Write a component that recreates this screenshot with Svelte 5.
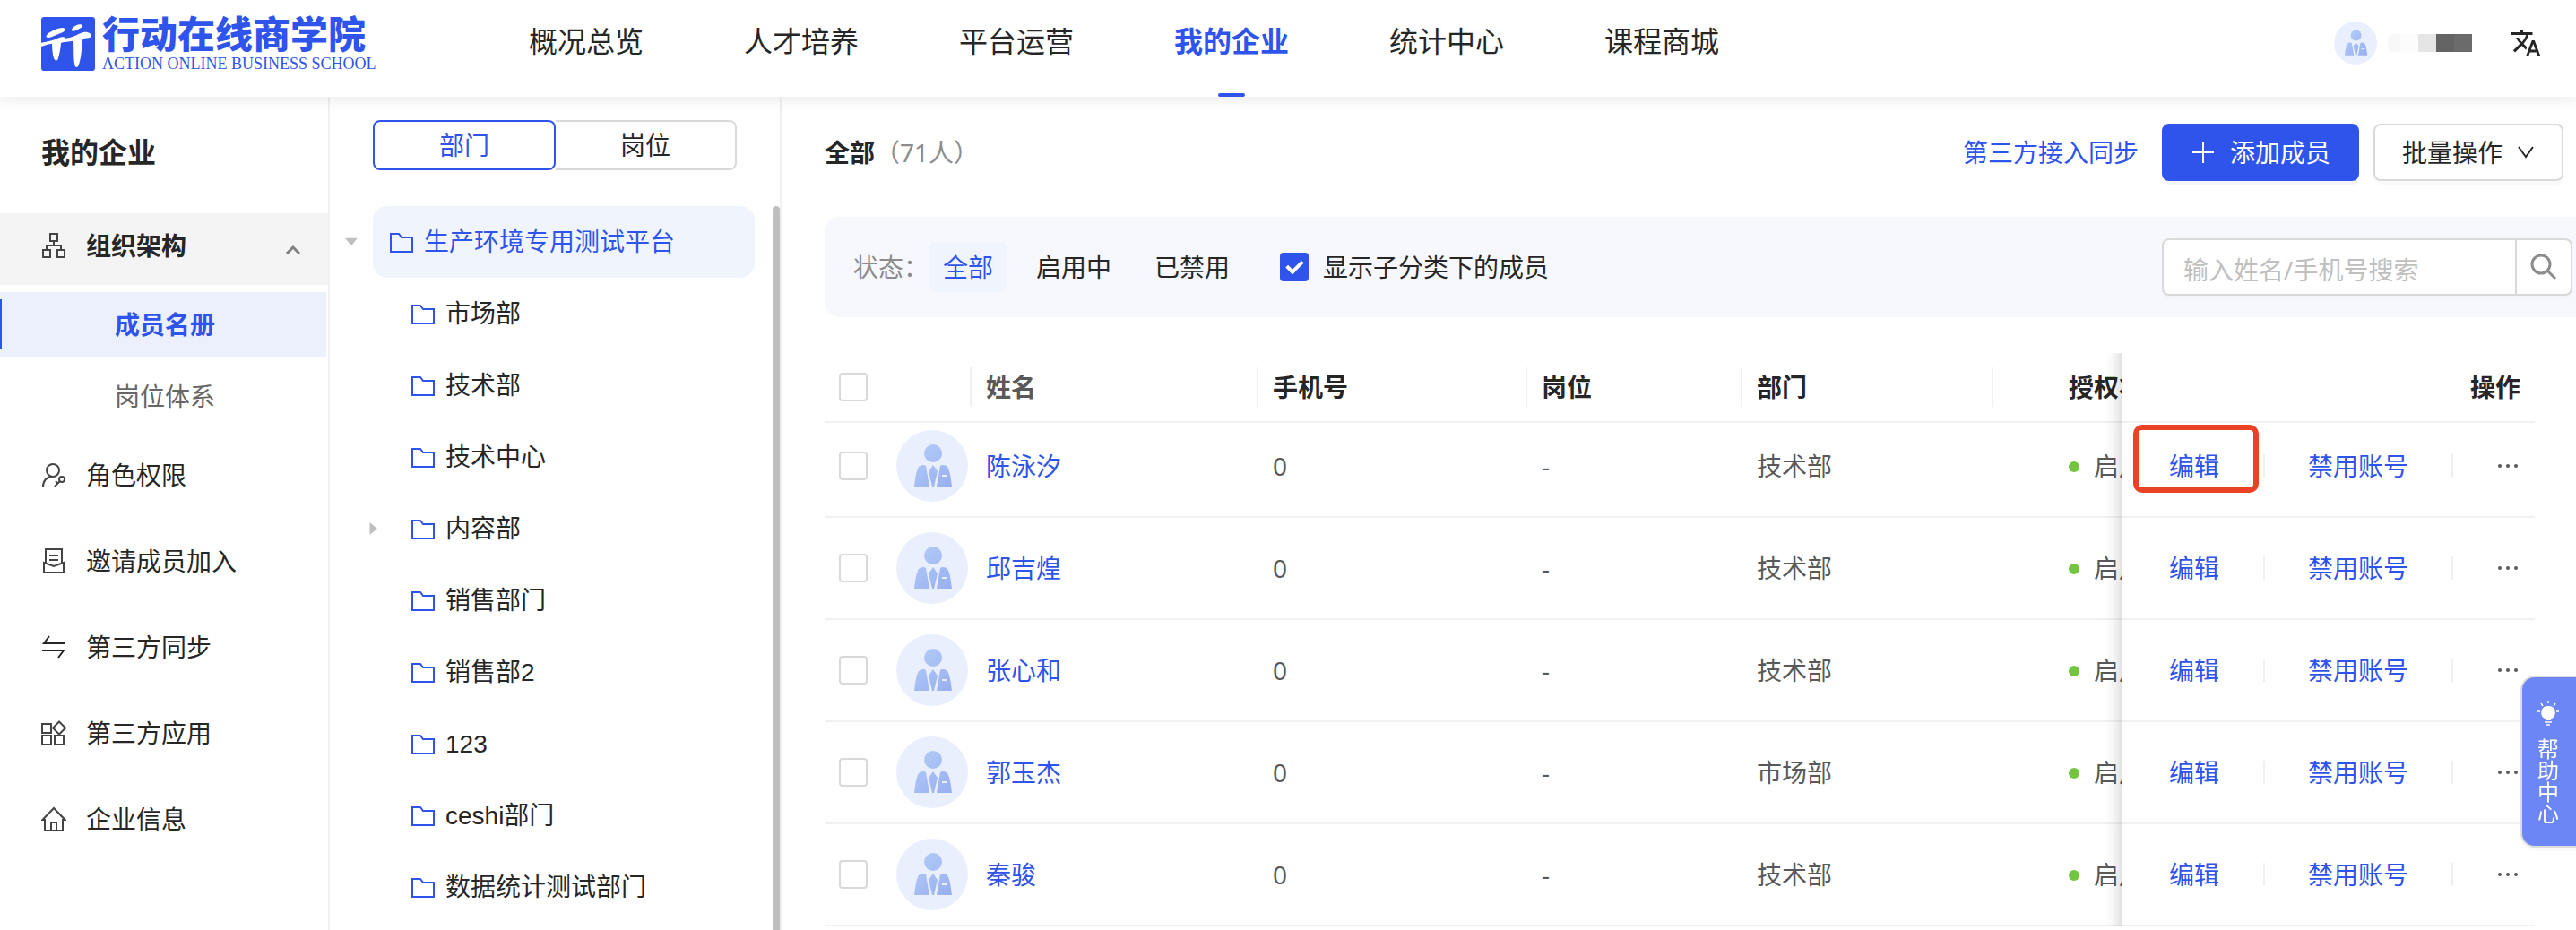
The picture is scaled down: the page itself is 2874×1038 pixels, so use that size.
<script>
  const navs = ['概况总览', '人才培养', '平台运营', '我的企业', '统计中心', '课程商城'];
  const statuses = ['全部', '启用中', '已禁用'];

  const folders = [
    { name: '市场部' },
    { name: '技术部' },
    { name: '技术中心' },
    { name: '内容部', hasChildren: true },
    { name: '销售部门' },
    { name: '销售部2' },
    { name: '123' },
    { name: 'ceshi部门' },
    { name: '数据统计测试部门' }
  ];

  const members = [
    { name: '陈泳汐', phone: '0', post: '-', dept: '技术部' },
    { name: '邱吉煌', phone: '0', post: '-', dept: '技术部' },
    { name: '张心和', phone: '0', post: '-', dept: '技术部' },
    { name: '郭玉杰', phone: '0', post: '-', dept: '市场部' },
    { name: '秦骏', phone: '0', post: '-', dept: '技术部' }
  ];

  let activeNav = $state('我的企业');
  let activeMenu = $state('成员名册');
  let activeTab = $state('部门');
  let activeStatus = $state('全部');
  let showChildren = $state(true);
  let keyword = $state('');
  let selected = $state([]);

  let allSelected = $derived(selected.length === members.length);

  function toggleAll() {
    selected = allSelected ? [] : members.map((m) => m.name);
  }
</script>

{#snippet avatar()}
  <svg class="avatar" viewBox="0 0 80 80" aria-hidden="true">
    <defs>
      <linearGradient id="suit" x1="18" y1="15" x2="62" y2="64" gradientUnits="userSpaceOnUse">
        <stop offset="0" stop-color="#b4cff8" />
        <stop offset="1" stop-color="#98aef1" />
      </linearGradient>
    </defs>
    <circle cx="40" cy="40" r="40" fill="#e9effc" />
    <g fill="url(#suit)">
      <circle cx="41" cy="26" r="10" />
      <path d="M20 63c1-8 2-16 4-20 1-3 3-4 7-4l2 1 4 23z" />
      <path d="M62 63c-1-8-2-16-4-20-1-3-3-4-7-4l-2 1-4 23zM51 50v2h6v-2z" fill-rule="evenodd" />
      <path d="M41 39l5 7-4 17h-2l-4-17z" />
    </g>
  </svg>
{/snippet}

{#snippet folderIcon()}
  <svg class="folder" viewBox="0 0 26 22" fill="none" stroke="#2f54eb" stroke-width="2" aria-hidden="true">
    <path d="M1 1h9l3 4h12v16H1z" />
  </svg>
{/snippet}

<div class="page">
  <header class="topbar">
    <a class="logo" href="#home">
      <svg viewBox="30 30 180 180" aria-hidden="true">
        <rect x="30" y="30" width="180" height="180" rx="10" fill="#2f54eb" />
        <g fill="#fff">
          <path d="M47 92c8-12 38-26 54-26 11 0 11 9 1 15L66 96c-11 4-22 4-19-4z" />
          <path d="M132 72c3-9 18-17 28-17 9 0 10 7 3 11l-17 9c-7 3-16 4-14-3z" />
          <path d="M30 116c22-4 44-8 60-17 10-5 20-2 22 2 22-1 38-14 60-20 12-2 27 4 26 13-2 6-12 7-20 7l-8 1c-2 8-4 20-5 36-1 20-5 44-12 57-4 5-9 3-11-4-4-21-3-54-4-81l-36 5-6 2c-1 14-4 36-10 54-4 8-11 5-14-3-5-14-5-32-6-49-12 2-24 5-36 10z" />
        </g>
      </svg>
      <span class="logo-text">
        <strong>行动在线商学院</strong>
        <small>ACTION ONLINE BUSINESS SCHOOL</small>
      </span>
    </a>
    <nav class="nav">
      {#each navs as n}
        <a href="#nav" class:active={n === activeNav} onclick={() => (activeNav = n)}>{n}</a>
      {/each}
    </nav>
    <div class="user">
      {@render avatar()}
      <span class="user-name"><i></i><i></i><i></i><i></i><i></i></span>
      <button class="lang" aria-label="语言">
        <svg viewBox="0 0 24 24" fill="#262626" aria-hidden="true">
          <path d="M12.870 15.070l-2.540-2.510.03-.03c1.740-1.940 2.980-4.170 3.710-6.530H17V4h-7V2H8v2H1v1.990h11.170C11.500 7.920 10.440 9.750 9 11.350 8.070 10.320 7.300 9.190 6.690 8h-2c.73 1.630 1.730 3.170 2.980 4.560l-5.090 5.020L4 19l5-5 3.110 3.110.76-2.040zM18.500 10h-2L12 22h2l1.120-3h4.750L21 22h2l-4.500-12zm-2.620 7l1.620-4.330L19.120 17h-3.240z" />
        </svg>
      </button>
    </div>
  </header>

  <div class="body">
    <aside class="side">
      <h1>我的企业</h1>
      <button class="menu open">
        <svg viewBox="0 0 28 28" class="menu-icon" aria-hidden="true">
          <path d="M10 1h8v8h-8zM2 19h8v8H2zM18 19h8v8h-8zM14 9v5M6 19v-5h16v5" />
        </svg>
        <span>组织架构</span>
        <svg class="chevron" viewBox="0 0 18 12" aria-hidden="true">
          <path d="M2 10l7-7 7 7" />
        </svg>
      </button>
      <div class="submenu">
        {#each ['成员名册', '岗位体系'] as s}
          <button class:active={s === activeMenu} onclick={() => (activeMenu = s)}>{s}</button>
        {/each}
      </div>
      <button class="menu">
        <svg viewBox="0 0 28 28" class="menu-icon" aria-hidden="true">
          <circle cx="13" cy="9" r="7" />
          <path d="M2 27c0-6 4-11 10-11" />
          <circle cx="23" cy="19" r="3" />
          <path d="M21 21l-6 6M16 21l3 3" />
        </svg>
        <span>角色权限</span>
      </button>
      <button class="menu">
        <svg viewBox="0 0 28 28" class="menu-icon" aria-hidden="true">
          <path d="M5 16V1h18v15M3 16v11h22V16l-11 4zM9 8h10M9 13h10" />
        </svg>
        <span>邀请成员加入</span>
      </button>
      <button class="menu">
        <svg viewBox="0 0 28 28" class="menu-icon" aria-hidden="true">
          <path d="M9 2l-6 8h24M1 18h24l-6 8" stroke="#262626" />
        </svg>
        <span>第三方同步</span>
      </button>
      <button class="menu">
        <svg viewBox="0 0 28 28" class="menu-icon" aria-hidden="true">
          <path d="M1 4h10v10H1zM1 17h10v10H1zM15 17h10v10H15zM20 1.500l7 7-7 7-7-7z" />
        </svg>
        <span>第三方应用</span>
      </button>
      <button class="menu">
        <svg viewBox="0 0 28 28" class="menu-icon" aria-hidden="true">
          <path d="M5 15H1.500L14 2l12.500 13H24v12H4V15M11 27v-9h6v9" />
        </svg>
        <span>企业信息</span>
      </button>
    </aside>

    <section class="tree">
      <div class="tabs">
        {#each ['部门', '岗位'] as t}
          <button class:active={t === activeTab} onclick={() => (activeTab = t)}>{t}</button>
        {/each}
      </div>
      <div class="tree-scroll">
        <ul>
          <li class="root">
            <span class="arrow down"></span>
            <button>{@render folderIcon()}生产环境专用测试平台</button>
          </li>
          {#each folders as f}
            <li>
              <span class="arrow" class:right={f.hasChildren}></span>
              <button>{@render folderIcon()}{f.name}</button>
            </li>
          {/each}
        </ul>
        <div class="scrollbar"></div>
      </div>
    </section>

    <main>
      <div class="heading">
        <h2>全部<span>（71人）</span></h2>
        <a href="#sync">第三方接入同步</a>
        <button class="btn primary">
          <svg viewBox="0 0 24 24" aria-hidden="true"><path d="M12 0v24M0 12h24" /></svg>
          添加成员
        </button>
        <button class="btn">
          批量操作
          <svg class="down" viewBox="0 0 20 14" aria-hidden="true"><path d="M2 1l8 11 8-11" /></svg>
        </button>
      </div>

      <div class="filter">
        <span class="label">状态：</span>
        <div class="chips">
          {#each statuses as s}
            <button class:active={s === activeStatus} onclick={() => (activeStatus = s)}>{s}</button>
          {/each}
        </div>
        <label class="check">
          <input type="checkbox" bind:checked={showChildren} />
          显示子分类下的成员
        </label>
        <form class="search" onsubmit={(e) => e.preventDefault()}>
          <input type="text" aria-label="搜索成员" placeholder="输入姓名/手机号搜索" bind:value={keyword} />
          <button aria-label="搜索">
            <svg viewBox="0 0 30 30" aria-hidden="true">
              <circle cx="12" cy="12" r="10" />
              <path d="M19 19l9 9" />
            </svg>
          </button>
        </form>
      </div>

      <div class="table-wrap">
        <table>
          <colgroup>
            <col class="c-check" />
            <col class="c-avatar" />
            <col class="c-name" />
            <col class="c-phone" />
            <col class="c-post" />
            <col class="c-dept" />
            <col class="c-state" />
            <col class="c-action" />
          </colgroup>
          <thead>
            <tr>
              <th><input type="checkbox" aria-label="全选" checked={allSelected} onchange={toggleAll} /></th>
              <th class="split"></th>
              <th class="split soft">姓名</th>
              <th class="split">手机号</th>
              <th class="split">岗位</th>
              <th class="split">部门</th>
              <th class="state">授权状态</th>
              <th class="fixed">操作</th>
            </tr>
          </thead>
          <tbody>
            {#each members as m, i (m.name)}
              <tr>
                <td><input type="checkbox" aria-label={m.name} value={m.name} bind:group={selected} /></td>
                <td class="face">{@render avatar()}</td>
                <td><a href="#member">{m.name}</a></td>
                <td>{m.phone}</td>
                <td>{m.post}</td>
                <td>{m.dept}</td>
                <td class="state"><span class="dot"></span>启用中</td>
                <td class="fixed">
                  <div class="actions">
                    <a href="#edit" class:marked={i === 0}>编辑</a>
                    <i></i>
                    <a href="#disable">禁用账号</a>
                    <i></i>
                    <button aria-label="更多">
                      <svg viewBox="0 0 24 8" fill="#595959" aria-hidden="true">
                        <circle cx="3" cy="4" r="2" />
                        <circle cx="12" cy="4" r="2" />
                        <circle cx="21" cy="4" r="2" />
                      </svg>
                    </button>
                  </div>
                </td>
              </tr>
            {/each}
          </tbody>
        </table>
      </div>
    </main>
  </div>

  <button class="help">
    <svg viewBox="0 0 26 28" aria-hidden="true">
      <path d="M13 6a7.500 7.500 0 0 1 4 14c-1 1-1 1-1 2h-6c0-1 0-1-1-2a7.500 7.500 0 0 1 4-14z" fill="#fff" />
      <path d="M13 0v3M5 3l2 3M21 3l-2 3M1 12h3M22 12h3M9 24h8M11 27h4" stroke="#fff" stroke-width="1.500" />
    </svg>
    <span>帮助中心</span>
  </button>
</div>

<style>
  :global(body) {
    overflow: hidden;
    background: #fff;
  }

  .page {
    height: 100vh;
    display: flex;
    flex-direction: column;
    font-family: 'Noto Sans', 'Noto Sans CJK SC', sans-serif;
    font-size: 28px;
    line-height: 40px;
    color: #262626;
  }

  button, input {
    margin: 0;
    font: inherit;
    color: inherit;
  }

  button {
    padding: 0;
    border: none;
    background: none;
    cursor: pointer;
  }

  a {
    color: #2f54eb;
    text-decoration: none;
  }

  svg { display: block; flex-shrink: 0; }

  /* top bar */
  .topbar {
    position: relative;
    z-index: 2;
    flex-shrink: 0;
    display: flex;
    align-items: center;
    height: 108px;
    padding: 0 38px 0 46px;
    box-sizing: border-box;
    background: #fff;
    box-shadow: 0 2px 16px rgba(0, 21, 41, 0.1);
  }

  .logo {
    display: flex;
    gap: 8px;
    width: 544px;
    padding-bottom: 8px;
    box-sizing: border-box;
  }
  .logo svg { width: 60px; height: 60px; }
  .logo-text {
    display: flex;
    flex-direction: column;
    gap: 4px;
    white-space: nowrap;
  }
  .logo-text strong {
    font-size: 42px;
    font-weight: 900;
    line-height: 38px;
  }
  .logo-text small {
    font-family: 'Liberation Serif', serif;
    font-size: 18px;
    line-height: 20px;
  }

  .nav {
    display: flex;
    gap: 112px;
    height: 100%;
  }
  .nav a {
    display: flex;
    flex-direction: column;
    justify-content: space-between;
    align-items: center;
    font-size: 32px;
    line-height: 92px;
    color: #262626;
  }
  .nav a::after {
    content: '';
    width: 30px;
    height: 4px;
    border-radius: 2px;
  }
  .nav .active { font-weight: 700; color: #2f54eb; }
  .nav .active::after { background: #2f54eb; }

  .user {
    display: flex;
    align-items: center;
    margin-left: auto;
    padding-bottom: 12px;
  }
  .user .avatar { width: 48px; height: 48px; }
  .user-name {
    display: flex;
    margin: 0 42px 0 12px;
  }
  .user-name i {
    width: 20px;
    height: 20px;
    background: #f8f8f8;
  }
  .user-name i:first-child { width: 14px; border-radius: 6px 0 0 6px; }
  .user-name i:nth-child(2) { background: #fcfcfc; }
  .user-name i:nth-child(3) { background: #e5e5e5; }
  .user-name i:nth-child(4) { background: #646464; }
  .user-name i:nth-child(5) { background: #6b6b6b; }
  .lang svg { width: 36px; height: 36px; }

  .body {
    flex: 1;
    min-height: 0;
    display: flex;
  }

  /* side menu */
  .side {
    flex-shrink: 0;
    width: 366px;
    border-right: 2px solid #f0f0f0;
    overflow: hidden;
  }
  .side h1 {
    margin: 0;
    padding: 40px 46px 46px;
    font-size: 32px;
    font-weight: 700;
    line-height: 44px;
  }
  .menu {
    display: flex;
    align-items: center;
    gap: 22px;
    width: 100%;
    height: 80px;
    margin-bottom: 16px;
    padding: 0 30px 0 46px;
    text-align: left;
  }
  .menu.open {
    margin-bottom: 8px;
    padding-bottom: 8px;
    font-weight: 700;
    background: #f4f4f4;
  }
  .menu-icon {
    width: 28px;
    height: 28px;
    fill: none;
    stroke: #444;
    stroke-width: 2;
  }
  .menu .chevron {
    width: 18px;
    height: 12px;
    margin: 10px 0 0 auto;
    fill: none;
    stroke: #808080;
    stroke-width: 3;
  }
  .submenu {
    display: flex;
    flex-direction: column;
    gap: 8px;
    margin-bottom: 12px;
    padding-right: 2px;
  }
  .submenu button {
    height: 72px;
    padding-left: 128px;
    text-align: left;
    color: #666;
  }
  .submenu .active {
    font-weight: 700;
    color: #2f54eb;
    background: linear-gradient(#2f54eb, #2f54eb) 0 50% / 2px 56px no-repeat #eceffc;
  }

  /* department tree */
  .tree {
    flex-shrink: 0;
    display: flex;
    flex-direction: column;
    width: 502px;
    border-right: 2px solid #f0f0f0;
  }
  .tabs {
    display: flex;
    margin: 26px 48px 40px;
  }
  .tabs button {
    flex: 1;
    height: 56px;
    border: 2px solid #d9d9d9;
    border-left-width: 0;
    border-radius: 0 8px 8px 0;
  }
  .tabs .active {
    border: 2px solid #2f54eb;
    border-radius: 8px;
    color: #2f54eb;
  }
  .tree-scroll {
    flex: 1;
    min-height: 0;
    display: flex;
    overflow: hidden;
    font-family: 'Liberation Sans', 'Noto Sans CJK SC', sans-serif;
  }
  .tree ul {
    flex: 1;
    margin: 0;
    padding: 0 20px 0 17px;
    list-style: none;
  }
  .tree li {
    display: flex;
    align-items: center;
    height: 80px;
    padding-left: 24px;
  }
  .tree li button {
    flex: 1;
    display: flex;
    align-items: center;
    gap: 12px;
    height: 100%;
    padding: 2px 0 0 19px;
    border-radius: 16px;
    text-align: left;
  }
  .tree .root { padding-left: 0; }
  .tree .root button { color: #2f54eb; background: #f0f4fc; }
  .folder { width: 26px; height: 22px; }
  .arrow {
    flex-shrink: 0;
    width: 31px;
    height: 14px;
  }
  .arrow::before {
    content: '';
    display: block;
    width: 14px;
    height: 14px;
  }
  .arrow.down::before {
    background: #bfbfbf;
    clip-path: polygon(0 20%, 100% 20%, 50% 80%);
  }
  .arrow.right::before {
    background: #bfbfbf;
    clip-path: polygon(25% 0, 85% 50%, 25% 100%);
  }
  .scrollbar {
    width: 8px;
    border-radius: 4px 4px 0 0;
    background: #bfbfbf;
  }

  /* content */
  main {
    flex: 1;
    min-width: 0;
    padding-left: 48px;
    overflow: hidden;
  }
  .heading {
    display: flex;
    align-items: center;
    margin: 30px 14px 40px 0;
  }
  .heading h2 {
    margin: 0 auto 0 0;
    font-size: 28px;
    font-weight: 700;
    line-height: 40px;
  }
  .heading h2 span { font-weight: 400; color: #8c8c8c; }
  .heading a { margin-right: 26px; }
  .btn {
    display: flex;
    align-items: center;
    gap: 16px;
    height: 64px;
    padding: 0 30px;
    border: 2px solid #d9d9d9;
    border-radius: 8px;
    background: #fff;
    box-shadow: 0 4px 0 rgba(0, 0, 0, 0.02);
  }
  .btn.primary {
    gap: 18px;
    margin-right: 16px;
    padding-left: 32px;
    border-color: #2f54eb;
    color: #fff;
    background: #2f54eb;
    box-shadow: 0 4px 0 rgba(0, 0, 0, 0.04);
  }
  .btn svg {
    width: 24px;
    height: 24px;
    fill: none;
    stroke: currentColor;
    stroke-width: 2;
  }
  .btn .down { width: 20px; height: 14px; }

  .filter {
    display: flex;
    align-items: center;
    height: 112px;
    margin-bottom: 40px;
    padding: 0 4px 0 32px;
    border-radius: 16px 0 0 16px;
    background: #f6f8fd;
  }
  .label { color: #8c8c8c; }
  .chips { display: flex; gap: 16px; }
  .chips button {
    height: 56px;
    padding: 0 16px;
    border-radius: 8px;
  }
  .chips .active { color: #2f54eb; background: #f0f4fd; }
  .check {
    display: flex;
    align-items: center;
    gap: 16px;
    margin-left: 40px;
  }

  input[type='checkbox'] {
    appearance: none;
    display: block;
    width: 32px;
    height: 32px;
    border: 2px solid #d9d9d9;
    border-radius: 4px;
    background: #fff;
  }
  input[type='checkbox']:checked {
    border-color: #2f54eb;
    background: #2f54eb;
  }
  input[type='checkbox']:checked::before {
    content: '';
    display: block;
    width: 7px;
    height: 14px;
    margin: 3px 0 0 9px;
    border: solid #fff;
    border-width: 0 4px 4px 0;
    transform: rotate(45deg);
  }

  .search {
    display: flex;
    width: 458px;
    height: 64px;
    margin-left: auto;
    border: 2px solid #d9d9d9;
    border-radius: 8px;
    box-sizing: border-box;
    background: #fff;
    box-shadow: 0 4px 0 rgba(0, 0, 0, 0.01);
  }
  .search input {
    flex: 1;
    min-width: 0;
    padding: 6px 22px 0;
    border: none;
    outline: none;
    background: none;
  }
  .search input::placeholder { color: #bfbfbf; }
  .search button {
    display: flex;
    align-items: center;
    justify-content: center;
    width: 62px;
    border-left: 2px solid #d9d9d9;
  }
  .search svg {
    width: 30px;
    height: 30px;
    fill: none;
    stroke: #8c8c8c;
    stroke-width: 3;
  }

  /* member table */
  .table-wrap {
    margin-right: 46px;
    overflow: hidden;
  }
  table {
    width: 100%;
    min-width: 2064px;
    table-layout: fixed;
    border-collapse: separate;
    border-spacing: 0;
  }
  .c-check { width: 64px; }
  .c-avatar { width: 100px; }
  .c-name { width: 320px; }
  .c-phone { width: 300px; }
  .c-post { width: 240px; }
  .c-dept { width: 280px; }
  .c-action { width: 460px; }

  th, td {
    padding: 16px;
    border-bottom: 2px solid #f0f0f0;
    text-align: left;
    white-space: nowrap;
  }
  th {
    position: relative;
    height: 44px;
    font-weight: 700;
  }
  td { color: #595959; }
  tbody tr:first-child td { padding-top: 8px; }
  .soft { color: #595959; }
  .split::after {
    content: '';
    position: absolute;
    top: 16px;
    right: 0;
    width: 2px;
    height: 44px;
    background: #f0f0f0;
  }
  td.face { padding-right: 4px; }
  .face .avatar { width: 80px; height: 80px; }
  th.state, td.state { padding-left: 84px; }
  .dot {
    display: inline-block;
    width: 12px;
    height: 12px;
    margin-right: 16px;
    border-radius: 50%;
    vertical-align: 4px;
    background: #73c43f;
  }

  .fixed {
    position: sticky;
    right: 0;
    background: #fff;
  }
  th.fixed { text-align: right; }
  .fixed::before {
    content: '';
    position: absolute;
    top: 0;
    bottom: -2px;
    left: -60px;
    width: 60px;
    box-shadow: inset -20px 0 16px -16px rgba(0, 0, 0, 0.18);
    pointer-events: none;
  }
  .actions {
    display: flex;
    align-items: center;
    justify-content: space-between;
    padding: 0 2px 0 36px;
  }
  .actions i {
    width: 2px;
    height: 26px;
    background: #f0f0f0;
  }
  .actions button { padding: 16px 0; }
  .actions button svg { width: 24px; height: 8px; }
  .marked { position: relative; }
  .marked::after {
    content: '';
    position: absolute;
    inset: -26px -44px -10px -40px;
    border: 6px solid #eb4125;
    border-radius: 10px;
  }

  .help {
    position: fixed;
    right: 0;
    bottom: 92px;
    z-index: 3;
    display: flex;
    flex-direction: column;
    align-items: center;
    gap: 14px;
    width: 62px;
    height: 192px;
    padding: 26px 18px 0 16px;
    border: 2px solid #dcdcdc;
    border-right: none;
    border-radius: 16px 0 0 16px;
    background: #6c87f5;
    box-shadow: 0 4px 0 rgba(0, 0, 0, 0.02);
  }
  .help svg { width: 26px; height: 28px; }
  .help span {
    width: 24px;
    font-size: 24px;
    line-height: 24px;
    color: #fff;
  }
</style>
